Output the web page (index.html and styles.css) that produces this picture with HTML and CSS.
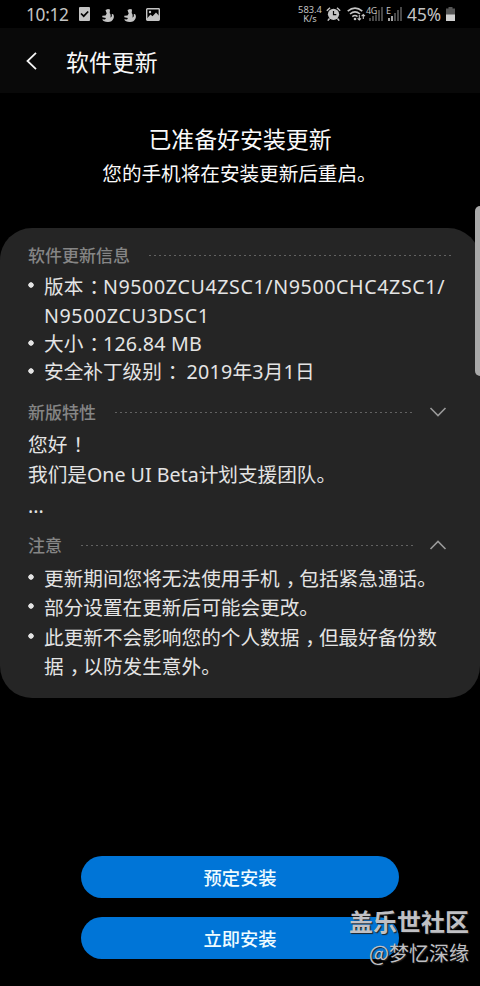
FILE: index.html
```html
<!DOCTYPE html>
<html lang="zh-CN">
<head>
<meta charset="utf-8">
<title>软件更新</title>
<link rel="stylesheet" href="styles.css">
</head>
<body>
<div class="status">
  <span class="clock">10:12</span>
  <svg class="s-check" width="11" height="14" viewBox="0 0 11 14"><rect width="11" height="14" rx="1" fill="#c4c4c4"/><path d="M2 6.5 4.7 9.2 9.2 4.5" fill="none" stroke="#000" stroke-width="1.7"/></svg>
  <svg class="s-app" width="12" height="13" viewBox="0 0 12 13"><path d="M3.500 1 6 0 8 .5 7.700 4Q9.300 6 8.300 8.500Q10.300 8.300 9.700 5.300L11 5Q12.500 7 11.500 9.500Q10 13 6 13Q1 13 .3 10.300L3 10.500 4 9 .3 8.300V6.800L3.500 6.500 4.700 4.500Z" fill="#c4c4c4"/></svg>
  <svg class="s-app2" width="12" height="13" viewBox="0 0 12 13"><path d="M3.500 1 6 0 8 .5 7.700 4Q9.300 6 8.300 8.500Q10.300 8.300 9.700 5.300L11 5Q12.500 7 11.500 9.500Q10 13 6 13Q1 13 .3 10.300L3 10.500 4 9 .3 8.300V6.800L3.500 6.500 4.700 4.500Z" fill="#c4c4c4"/></svg>
  <svg class="s-pic" width="14" height="13" viewBox="0 0 14 13"><rect x=".7" y=".7" width="12.6" height="11.6" rx=".7" fill="none" stroke="#c4c4c4" stroke-width="1.4"/><circle cx="4" cy="4" r="1.2" fill="#c4c4c4"/><path d="M1 10.5 4.5 6.5 6.5 8.3 10 4.5 13 7.8V12H1Z" fill="#c4c4c4"/></svg>
  <span class="speed"><span>583.4</span><span>K/s</span></span>
  <svg class="s-alarm" width="15" height="14" viewBox="0 0 15 14"><circle cx="7.5" cy="7.3" r="5.6" fill="#c4c4c4"/><path d="M.8 3.8 4 .8M14.2 3.8 11 .8M3.5 11.5 1.8 13.6M11.5 11.5 13.2 13.6" stroke="#c4c4c4" stroke-width="1.5"/><path d="M7.5 4V7.6H10.3" fill="none" stroke="#000" stroke-width="1.2"/></svg>
  <svg class="s-wifi" width="19" height="14" viewBox="0 0 19 14"><g fill="none" stroke="#c4c4c4" stroke-width="1.6"><path d="M.7 4.2Q8 -2 15.3 4.2M3 7Q8 2.700 13 7M5.300 9.600Q8 7.400 10.500 9.600"/></g><circle cx="8" cy="12" r="1.300" fill="#c4c4c4"/><path d="M12.300 8V13M10.600 11.300 12.300 13 14 11.300M16.300 12V7.500M14.600 9.200 16.300 7.500 18 9.200" fill="none" stroke="#c4c4c4" stroke-width="1.100"/></svg>
  <span class="net">4G</span>
  <svg class="s-sig" width="14" height="14" viewBox="0 0 14 14"><path d="M1 11V14M4 9V14M7 7.500V14M10 3V14M13 0V14" stroke="#555" stroke-width="1.700"/></svg>
  <span class="net e">E</span>
  <svg class="s-sig2" width="14" height="14" viewBox="0 0 14 14"><path d="M7 6V14M10 3V14M13 0V14" stroke="#555" stroke-width="1.700"/><path d="M1 11V14M4 9V14" stroke="#c4c4c4" stroke-width="1.700"/></svg>
  <span class="pct">45%</span>
  <svg class="s-bat" width="9" height="14" viewBox="0 0 9 14"><path d="M2.500 0H6.500V1.500H9V8H0V1.500H2.500Z" fill="#555"/><path d="M0 7.500H9V14H0Z" fill="#d0d0d0"/></svg>
</div>
<header class="bar">
  <svg width="11" height="18" viewBox="0 0 11 18"><path d="M10 .8 1.500 9 10 17.200" fill="none" stroke="#f5f5f5" stroke-width="1.800"/></svg>
  <h1>软件更新</h1>
</header>
<section class="intro">
  <h2>已准备好安装更新</h2>
  <p>您的手机将在安装更新后重启。</p>
</section>
<main class="card">
  <div class="sec first"><h3>软件更新信息</h3><svg class="dots" height="1"><line x1="0" x2="100%" y1=".5" y2=".5"/></svg></div>
  <ul class="info">
    <li>版本<span class="mid">：</span><span class="code">N9500ZCU4ZSC1/N9500CHC4ZSC1/</span><br><span class="code">N9500ZCU3DSC1</span></li>
    <li>大小<span class="mid">：</span><span class="size">126.84 MB</span></li>
    <li>安全补丁级别<span class="mid">：</span> <span class="date">2019年3月1日</span></li>
  </ul>
  <div class="sec feat"><h3>新版特性</h3><svg class="dots" height="1"><line x1="0" x2="100%" y1=".5" y2=".5"/></svg><svg class="chev" width="18" height="10" viewBox="0 0 18 10"><path d="M1.500 1 9 8.500 16.500 1"/></svg></div>
  <div class="text">
    <p>您好<span class="mid">！</span></p>
    <p>我们是One UI Beta计划支援团队。</p>
    <p class="more">...</p>
  </div>
  <div class="sec note"><h3>注意</h3><svg class="dots" height="1"><line x1="0" x2="100%" y1=".5" y2=".5"/></svg><svg class="chev" width="18" height="10" viewBox="0 0 18 10"><path d="M1.500 9 9 1.500 16.500 9"/></svg></div>
  <ul class="notes">
    <li>更新期间您将无法使用手机<span class="mid">，</span>包括紧急通话。</li>
    <li>部分设置在更新后可能会更改。</li>
    <li>此更新不会影响您的个人数据<span class="mid">，</span>但最好备份数<br>据<span class="mid">，</span>以防发生意外。</li>
  </ul>
</main>
<div class="actions">
  <button>预定安装</button>
  <button>立即安装</button>
</div>
<div class="edge"></div>
<div class="mark"><b>盖乐世社区</b><span><i>@</i>梦忆深缘</span></div>
</body>
</html>
```
FILE: styles.css
```css
* { box-sizing: border-box; margin: 0; padding: 0; }
body {
  width: 480px; height: 986px; overflow: hidden; position: relative;
  background: #000; color: #e4e4e4;
  font-family: "Noto Sans", "Noto Sans CJK SC", sans-serif;
}
svg { display: block; flex: none; }
.status { height: 28px; display: flex; align-items: center; padding-left: 26px; color: #c4c4c4; white-space: nowrap; line-height: 28px; }
.clock { width: 53px; font-size: 17.3px; letter-spacing: -.3px; padding-top: 1px; }
.s-app { margin-left: 12px; margin-top: 2px; }
.s-app2 { margin-left: 10px; margin-top: 2px; }
.s-pic { margin-left: 10px; }
.speed { display: flex; flex-direction: column; width: 26px; margin-left: 137px; font-size: 9.3px; line-height: 9px; align-items: center; }
.speed span { height: 9px; }
.s-alarm { margin-left: 3px; }
.s-wifi { margin-left: 6px; }
.net { width: 12px; height: 18px; font-size: 9px; line-height: 11px; margin-left: 0; letter-spacing: -.3px; }
.s-sig { margin-left: -9px; }
.net.e { margin-left: 3px; width: 6px; }
.s-sig2 { margin-left: -4px; }
.pct { width: 39px; margin-left: 5px; font-size: 17.3px; padding-top: 1px; }
.s-bat { margin-left: 0; }
.bar { height: 65px; background: #090909; display: flex; align-items: center; padding-left: 26px; gap: 29px; color: #f8f8f8; }
.bar h1 { font-size: 22.9px; font-weight: 400; line-height: 30px; padding-top: 4px; }
.intro { height: 135px; padding-top: 31px; text-align: center; color: #fafafa; }
.intro h2 { font-size: 22.9px; font-weight: 400; line-height: 32px; }
.intro p { font-size: 19.6px; line-height: 36px; padding-right: 1px; }
.card { height: 470px; background: #252525; border-radius: 32px; padding: 14px 28px 0; font-size: 19.65px; }
.sec { height: 26px; display: flex; align-items: center; }
.sec h3 { font-size: 17px; font-weight: 500; line-height: 26px; color: #858585; margin-right: 19px; padding-top: 1px; }
.dots { flex: 1; width: 0; min-width: 0; }
.dots line { stroke: #626262; stroke-width: 1; stroke-dasharray: 2 3; }
.first .dots { margin-right: 1px; }
.chev { margin: 0 5px 0 14px; }
.chev path { fill: none; stroke: #999; stroke-width: 1.6; }
.feat { margin-top: 13px; }
.note { margin-top: 10px; }
ul { list-style: none; }
li { padding-left: 16px; white-space: nowrap; background: radial-gradient(circle at 3px 13px, #e4e4e4 2.4px, transparent 3px); }
.info { padding-top: 4px; }
.info li { line-height: 28px; }
.info li:first-child { line-height: 29px; }
.code { letter-spacing: .6px; }
.size, .date { letter-spacing: .22px; }
.text { padding-top: 5px; }
.text p { height: 29.5px; line-height: 29.5px; white-space: nowrap; }
.text .more { height: 33px; line-height: 33px; }
.notes { padding-top: 6px; }
.notes li { line-height: 29.3px; }
.mid { padding: 0 3.8px 0 6px; font-feature-settings: "halt" 1; }
.actions { padding: 158px 81px 0 81px; display: flex; flex-direction: column; gap: 19px; }
button { height: 42px; border: 0; border-radius: 21px; background: #0075d7; color: #effcff; font: 500 18.3px/42px "Noto Sans CJK SC", sans-serif; }
.edge { position: absolute; left: 475px; top: 206px; width: 12px; height: 170px; border-radius: 5px; background: #a9a9a9; }
.mark { position: absolute; right: 11px; top: 907px; display: flex; flex-direction: column; align-items: flex-end; color: #c0c0c4; white-space: nowrap; text-shadow: 1px 1px 1px #222; }
.mark b { font-size: 24px; line-height: 30px; }
.mark span { font-size: 20px; line-height: 29px; }
.mark i { font-style: normal; font-family: "Noto Sans CJK SC", sans-serif; font-size: 21.5px; }
```
